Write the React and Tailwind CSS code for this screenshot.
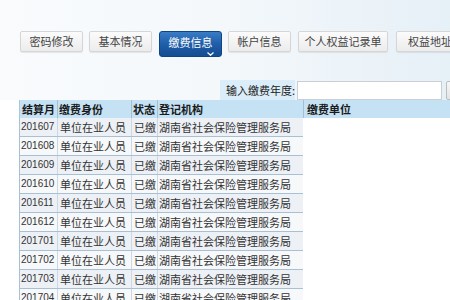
export default function App() {
  const months = ['201607','201608','201609','201610','201611','201612','201701','201702','201703','201704'];
  const tabs = [
    { t: '密码修改', w: 'w-[63px]', ml: 'ml-0' },
    { t: '基本情况', w: 'w-[63px]', ml: 'ml-[6px]' },
  ];
  const tabs2 = [
    { t: '帐户信息', w: 'w-[63px]', ml: 'ml-[6px]' },
    { t: '个人权益记录单', w: 'w-[90px]', ml: 'ml-[7px]' },
    { t: '权益地址查询', w: 'w-[90px]', ml: 'ml-[8px]' },
  ];
  const tabCls = 'h-[21px] shrink-0 flex items-center justify-center rounded-[2px] border border-[#d6d6d6] bg-gradient-to-b from-[#fbfbfb] to-[#ececec] text-[11px] text-[#444] shadow-[0_1px_1px_rgba(0,0,0,0.08)]';
  return (
    <div className="w-[450px] h-[300px] overflow-hidden bg-white font-['Noto_Sans_CJK_SC',sans-serif]">
      <div className="h-[100px] bg-gradient-to-r from-[#f9fbfd] via-[#f4f8fb] to-[#e6f0f7] pt-[31px]">
        <div className="flex items-start h-[26px] pl-[20px] whitespace-nowrap">
          {tabs.map((x) => (
            <div key={x.t} className={`${tabCls} ${x.w} ${x.ml}`}>{x.t}</div>
          ))}
          <div className="ml-[7px] w-[63px] h-[26px] shrink-0 flex flex-col items-center rounded-[3px] bg-gradient-to-b from-[#3a7cc6] via-[#1f5ea9] to-[#144d92] text-[11px] text-white border border-[#0f4584]">
            <div className="h-[20px] leading-[20px]">缴费信息</div>
            <div className="w-full flex justify-end pr-[7px]">
              <svg width="7" height="4" viewBox="0 0 7 4"><polyline points="0.5,0.5 3.5,3.2 6.5,0.5" fill="none" stroke="white" strokeWidth="1.3" /></svg>
            </div>
          </div>
          {tabs2.map((x) => (
            <div key={x.t} className={`${tabCls} ${x.w} ${x.ml}`}>{x.t}</div>
          ))}
        </div>
        <div className="mt-[23px] flex items-center h-[20px] pl-[220px] whitespace-nowrap">
          <div className="w-[75px] h-[20px] shrink-0 bg-[#dbedf8] text-[11px] text-[#222] leading-[20px] text-right">输入缴费年度:</div>
          <div className="ml-[2px] w-[145px] h-[19px] shrink-0 bg-white border border-[#c9cfd4]"></div>
          <div className="ml-[4px] w-[20px] h-[19px] shrink-0 bg-gradient-to-b from-[#f7f7f7] to-[#e4e4e4] border border-[#bdbdbd] rounded-[2px]"></div>
        </div>
      </div>
      <div className="ml-[19px]">
        <div className="flex h-[18px] bg-[#c5e2f4] border-l border-[#a9c6da] text-[11px] font-bold text-[#1a1a1a] leading-[18px] whitespace-nowrap">
          <div className="w-[38px] shrink-0 border-r border-[#a3bfd4] pl-[2px]">结算月</div>
          <div className="w-[74px] shrink-0 border-r border-[#a3bfd4] pl-[1px]">缴费身份</div>
          <div className="w-[26px] shrink-0 border-r border-[#a3bfd4] pl-[1px]">状态</div>
          <div className="w-[146px] shrink-0 border-r border-[#a3bfd4] pl-[1px]">登记机构</div>
          <div className="flex-1 pl-[3px]">缴费单位</div>
        </div>
        {months.map((m, i) => (
          <div key={m} className={`flex w-[284px] h-[19px] border-l border-b border-[#a7c0d3] text-[11px] text-[#333] leading-[18px] whitespace-nowrap ${i % 2 === 0 ? 'bg-[#edf1f6]' : 'bg-[#f6f8fa]'}`}>
            <div className="w-[38px] shrink-0 border-r border-[#cad9e5] pl-[1px] text-[10px] font-['Liberation_Sans',sans-serif]">{m}</div>
            <div className="w-[74px] shrink-0 border-r border-[#cad9e5] pl-[2px]">单位在业人员</div>
            <div className="w-[26px] shrink-0 border-r border-[#cad9e5] pl-[2px]">已缴</div>
            <div className="w-[146px] shrink-0 pl-[1px]">湖南省社会保险管理服务局</div>
          </div>
        ))}
      </div>
    </div>
  );
}
